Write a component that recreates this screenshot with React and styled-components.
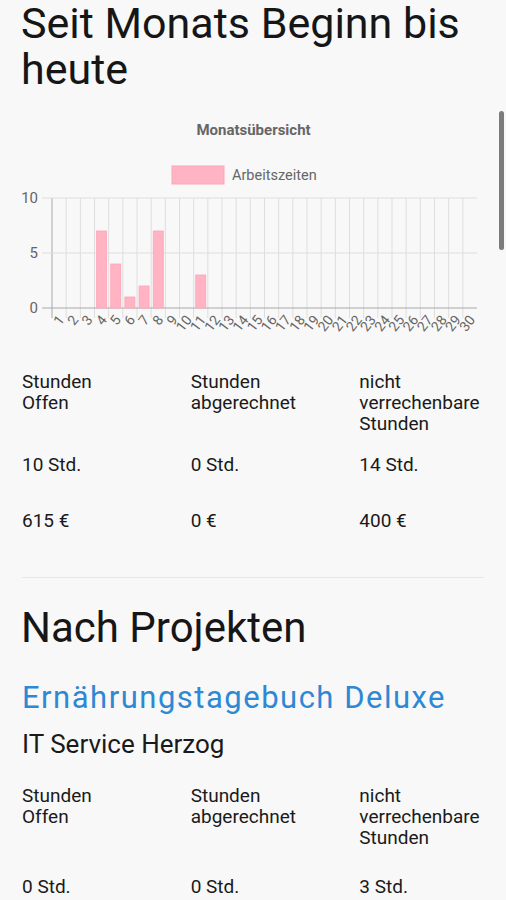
import React from "react";
import styled, { createGlobalStyle } from "styled-components";

const GlobalStyle = createGlobalStyle`
  html, body {
    margin: 0;
    padding: 0;
    overflow: hidden;
    background: #f8f8f8;
  }
  body {
    font-family: Roboto, "Liberation Sans", Arial, sans-serif;
    color: #1a1a1a;
  }
`;

const Page = styled.main`
  padding: 0 22px;
  background: #f8f8f8;
  min-height: 100vh;
  box-sizing: border-box;
`;

const PageTitle = styled.h1`
  margin: ${(p) => p.$mt}px 0 0;
  font-size: ${(p) => p.$size}px;
  line-height: 46px;
  font-weight: 400;
  color: #161616;
  margin-left: -1px;
`;

const ChartWrap = styled.div`
  margin-top: 9px;
  height: 245px;
`;

const StatRow = styled.div`
  display: grid;
  grid-template-columns: repeat(3, 1fr);
  margin: ${(p) => p.$mt}px -22px 0;
  font-size: 19px;
  line-height: 21px;
  color: #1a1a1a;
`;

const StatCell = styled.div`
  padding-left: 22px;
`;

const Line = styled.span`
  display: block;
`;

const Divider = styled.hr`
  margin: 46px 0 0;
  border: 0;
  height: 1px;
  background: #e7e7e7;
`;

const ProjectTitle = styled.h2`
  margin: 29px 0 0;
  font-size: 31px;
  line-height: 36px;
  font-weight: 400;
  letter-spacing: 1.5px;
  color: #2e88d4;
`;

const ClientName = styled.div`
  margin-top: 13px;
  font-size: 26px;
  line-height: 30px;
  color: #1a1a1a;
`;

const Scrollbar = styled.div`
  position: fixed;
  right: 2px;
  top: 111px;
  width: 5px;
  height: 139px;
  border-radius: 3px;
  background: #7c7c7c;
`;

const data = { 4: 7, 5: 4, 6: 1, 7: 2, 8: 7, 11: 3 };

function MonthChart() {
  const left = 30;
  const right = 455;
  const top = 97;
  const bottom = 207;
  const n = 30;
  const cw = (right - left) / n;
  const unit = (bottom - top) / 10;
  const grid = "#dedede";
  const axis = "#a9a9a9";
  const tick = "#666";
  const days = Array.from({ length: n }, (_, i) => i + 1);
  return (
    <svg width="462" height="245" viewBox="0 0 462 245" style={{ display: "block" }}>
      <text
        x="231.5"
        y="34"
        textAnchor="middle"
        fontFamily="Roboto, sans-serif"
        fontWeight="700"
        fontSize="15"
        fill="#666"
      >
        Monatsübersicht
      </text>
      <rect x="150" y="65" width="52" height="18" fill="#ffb3c3" stroke="#ffa5b8" strokeWidth="1" />
      <text x="210" y="74" dominantBaseline="central" fontFamily="Roboto, sans-serif" fontSize="14.5" fill="#666">
        Arbeitszeiten
      </text>

      {days.map((d, i) => {
        const x = left + i * cw;
        return (
          <line
            key={"v" + d}
            x1={x}
            x2={x}
            y1={top}
            y2={bottom + 10}
            stroke={i === 0 ? axis : grid}
            strokeWidth="1"
          />
        );
      })}
      {[10, 5, 0].map((v) => {
        const y = bottom - v * unit;
        return (
          <g key={"h" + v}>
            <line x1={left - 10} x2={right} y1={y} y2={y} stroke={v === 0 ? axis : grid} strokeWidth="1" />
            <text
              x={left - 14}
              y={y}
              textAnchor="end"
              dominantBaseline="central"
              fontFamily="Roboto, sans-serif"
              fontSize="15"
              fill={tick}
            >
              {v}
            </text>
          </g>
        );
      })}

      {Object.entries(data).map(([d, v]) => {
        const cx = left + (Number(d) - 0.5) * cw;
        const h = v * unit;
        return (
          <rect
            key={"b" + d}
            x={cx - 5}
            y={bottom - h}
            width="10"
            height={h}
            fill="#ffb3c3"
            stroke="#ffa3b7"
            strokeWidth="0.8"
          />
        );
      })}

      {days.map((d) => {
        const cx = left + (d - 0.5) * cw;
        return (
          <text
            key={"l" + d}
            transform={`translate(${cx + 2} 216) rotate(-52)`}
            textAnchor="end"
            dominantBaseline="central"
            fontFamily="Roboto, sans-serif"
            fontSize="14"
            fill={tick}
          >
            {d}
          </text>
        );
      })}
    </svg>
  );
}

function Stats({ headerGap, valueGap, rows }) {
  const headers = [["Stunden", "Offen"], ["Stunden", "abgerechnet"], ["nicht", "verrechenbare", "Stunden"]];
  return (
    <>
      <StatRow $mt={headerGap}>
        {headers.map((h, i) => (
          <StatCell key={i}>
            {h.map((l) => (
              <Line key={l}>{l}</Line>
            ))}
          </StatCell>
        ))}
      </StatRow>
      {rows.map((r, ri) => (
        <StatRow key={ri} $mt={ri === 0 ? valueGap : 35}>
          {r.map((c, ci) => (
            <StatCell key={ci}>{c}</StatCell>
          ))}
        </StatRow>
      ))}
    </>
  );
}

export default function App() {
  return (
    <>
      <GlobalStyle />
      <Page>
        <PageTitle $mt={0} $size={43}>
          Seit Monats Beginn bis heute
        </PageTitle>
        <ChartWrap>
          <MonthChart />
        </ChartWrap>
        <Stats
          headerGap={25}
          valueGap={20}
          rows={[
            ["10 Std.", "0 Std.", "14 Std."],
            ["615 €", "0 €", "400 €"],
          ]}
        />
        <Divider />
        <PageTitle as="h2" $mt={27} $size={42}>
          Nach Projekten
        </PageTitle>
        <ProjectTitle>Ernährungstagebuch Deluxe</ProjectTitle>
        <ClientName>IT Service Herzog</ClientName>
        <Stats headerGap={26} valueGap={28} rows={[["0 Std.", "0 Std.", "3 Std."]]} />
      </Page>
      <Scrollbar />
    </>
  );
}
